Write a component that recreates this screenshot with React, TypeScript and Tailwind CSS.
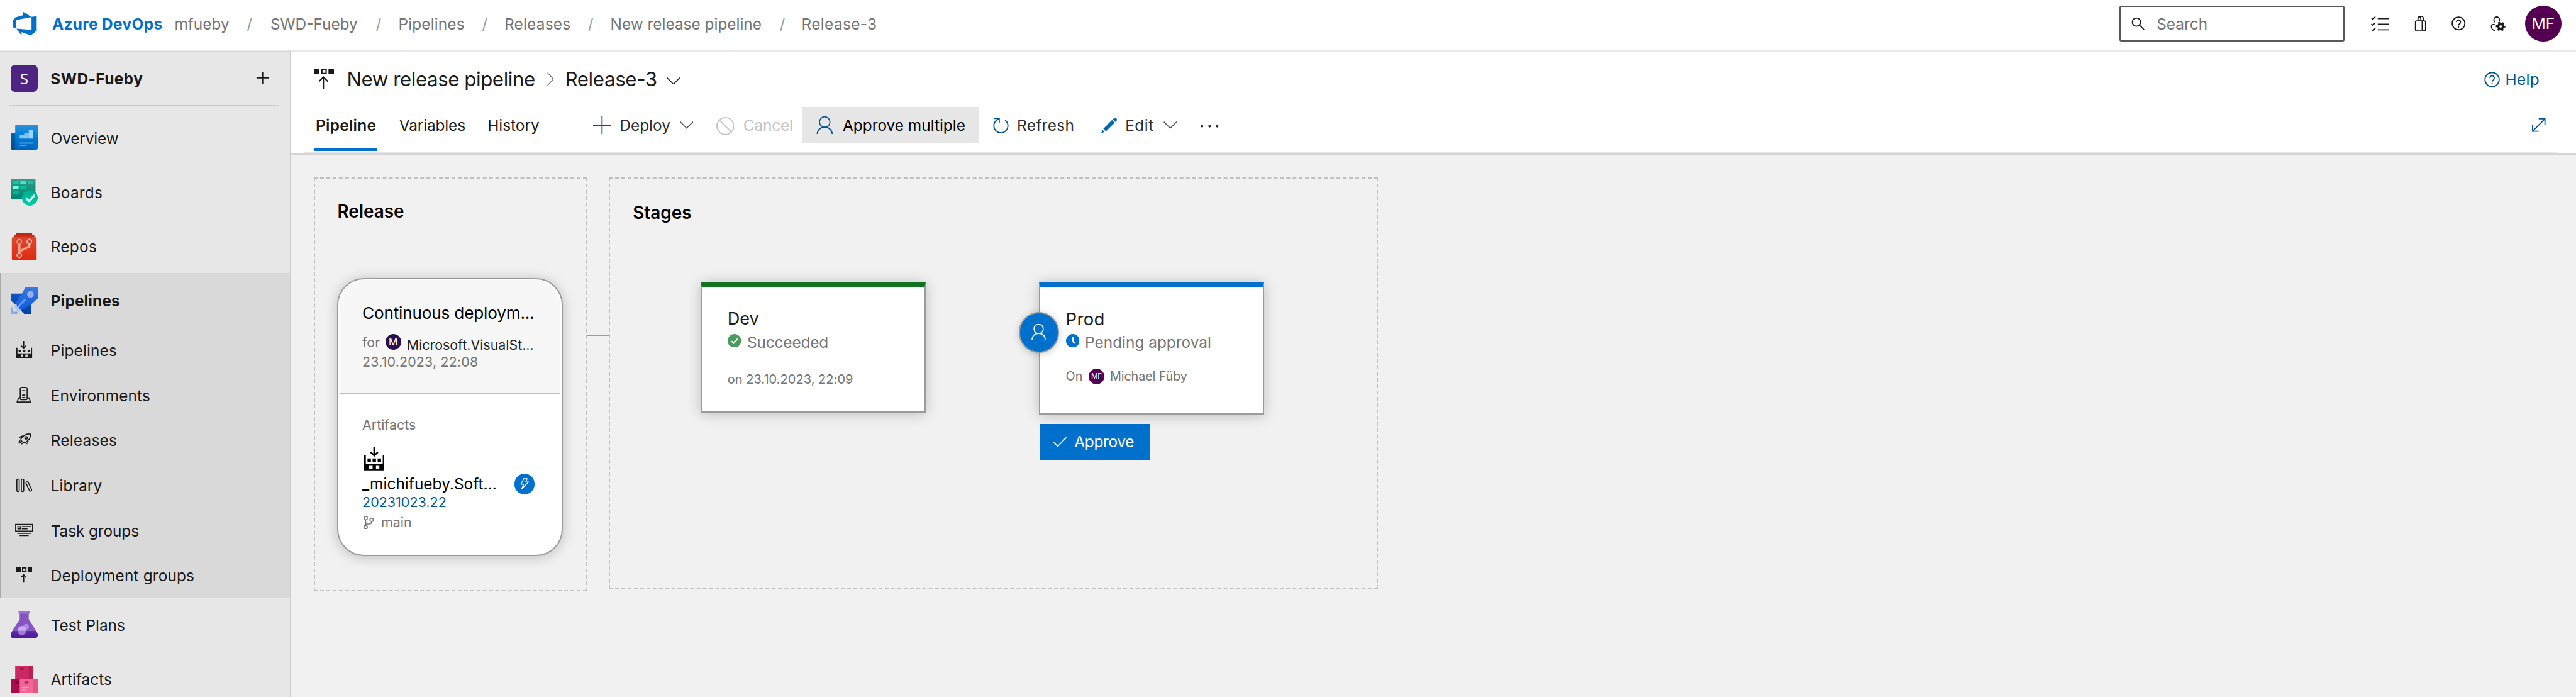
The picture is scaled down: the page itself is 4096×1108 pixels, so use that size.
import React from "react";

/* ---------- navigation icons ---------- */

const LogoIcon = () => (
  <svg viewBox="0 0 16 16" className="ml-20 h-48 w-48 shrink-0" fill="#0070cd">
    <path d="M15 3.622v8.512L11.5 15l-5.425-1.975v1.958L3.004 10.97l8.951.7V4.005L15 3.622zm-2.984.428L6.994 1v2.001L2.382 4.356 1 6.13v4.029l1.978.873V5.869l9.038-1.818z" />
  </svg>
);

const OverviewIcon = () => (
  <svg viewBox="0 0 48 48" className="h-48 w-48">
    <defs>
      <linearGradient id="ov" x1="0" y1="0" x2="0" y2="1">
        <stop offset="0" stopColor="#2b91dc" />
        <stop offset="0.4" stopColor="#0081d6" />
        <stop offset="1" stopColor="#0062ba" />
      </linearGradient>
      <linearGradient id="ovb" x1="0" y1="0" x2="0" y2="1">
        <stop offset="0" stopColor="#0068b0" />
        <stop offset="1" stopColor="#00498c" />
      </linearGradient>
    </defs>
    <path d="M1 16h8v26a4 4 0 0 1-4 4h-1a4 4 0 0 1-4-4V17a1 1 0 0 1 1-1z" fill="url(#ovb)" />
    <path d="M9 2h38a1 1 0 0 1 1 1v39a4 4 0 0 1-4 4H4a4 4 0 0 0 4-4V3a1 1 0 0 1 1-1z" fill="url(#ov)" />
    <path d="M40 28h8v14a4 4 0 0 1-8 0z" fill="#0072d2" opacity="0.7" />
    <path d="M16 20h8v6h-8zM24 16h8v10h-8z" fill="#83c4f8" />
    <path d="M32 10h8v16h-8z" fill="#9dd4ff" />
    <path d="M16 33h24v2H16zM16 37h12v2H16z" fill="#4fa6ec" />
  </svg>
);

const BoardsIcon = () => (
  <svg viewBox="0 0 48 48" className="h-48 w-48">
    <defs>
      <linearGradient id="bo" x1="0" y1="0" x2="0" y2="1">
        <stop offset="0" stopColor="#2f9f8b" />
        <stop offset="1" stopColor="#008570" />
      </linearGradient>
      <linearGradient id="boc" x1="0" y1="0" x2="0" y2="1">
        <stop offset="0" stopColor="#00a98c" />
        <stop offset="1" stopColor="#00cca8" />
      </linearGradient>
    </defs>
    <rect width="44" height="36" rx="1.5" fill="url(#bo)" />
    <path d="M4 4h10v6H4zM30 4h10v6H30z" fill="#22bea2" />
    <path d="M17 4h10v6H17z" fill="#4fe0c8" />
    <path d="M4 13h10v6H4z" fill="#72ffe2" />
    <path d="M17 13h10v6H17z" fill="#10b89c" />
    <path d="M4 22h10v6H4z" fill="#06b598" />
    <circle cx="34" cy="34" r="14" fill="url(#boc)" />
    <path d="M27 34.500l6 5.500 9.500-11" fill="none" stroke="#b4ffee" strokeWidth="4" />
  </svg>
);

const ReposIcon = () => (
  <svg viewBox="0 0 48 48" className="h-48 w-48">
    <defs>
      <linearGradient id="re" x1="0" y1="0" x2="0" y2="1">
        <stop offset="0" stopColor="#d84a34" />
        <stop offset="1" stopColor="#de2c10" />
      </linearGradient>
    </defs>
    <rect x="10" y="0" width="28" height="6" rx="1.5" fill="#b9270f" />
    <rect x="6" y="4" width="36" height="8" rx="1.5" fill="#cf2a12" />
    <rect x="2" y="8" width="44" height="40" rx="1.5" fill="url(#re)" />
    <path d="M15.3 20v16M33 20v4.5L15.3 33" fill="none" stroke="#ff9f88" strokeWidth="4" />
    <g fill="#d9412a" stroke="#ffc3b4" strokeWidth="2">
      <circle cx="15.3" cy="16" r="4" stroke="#ff9f88" />
      <circle cx="33" cy="16" r="4" />
      <circle cx="15.3" cy="40" r="4" />
    </g>
  </svg>
);

const PipelinesIcon = () => (
  <svg viewBox="0 0 48 48" className="h-48 w-48">
    <defs>
      <linearGradient id="pi" x1="0" y1="0" x2="0" y2="1">
        <stop offset="0" stopColor="#3c78e0" />
        <stop offset="1" stopColor="#0c5ad8" />
      </linearGradient>
      <linearGradient id="pib" x1="0" y1="0" x2="0" y2="1">
        <stop offset="0" stopColor="#0f55c4" />
        <stop offset="1" stopColor="#0040a8" />
      </linearGradient>
    </defs>
    <path d="M1 12h19L8 31 0 24V13a1 1 0 0 1 1-1zM36 28v19a1 1 0 0 1-1 1H24l-7-7z" fill="url(#pib)" />
    <path d="M28.5 0H46a2 2 0 0 1 2 2v18.5L35 32 18 42 8 31 26 1.5z" fill="url(#pi)" />
    <circle cx="35" cy="13" r="6" fill="#8fb1f0" />
    <path d="M25 20l3 3-14 15-3-3z" fill="#5c93ee" />
    <path d="M0 36h4v8h8v4H0z" fill="#86aaec" />
    <path d="M8 30l3 2v4l4-1-1 4 4 1v3l-5 1-4-4-2-4z" fill="#a9c3f2" />
  </svg>
);

const TestPlansIcon = () => (
  <svg viewBox="0 0 48 48" className="h-48 w-48">
    <defs>
      <linearGradient id="tp" x1="0" y1="0" x2="0" y2="1">
        <stop offset="0" stopColor="#8254bd" />
        <stop offset="1" stopColor="#8a53c8" />
      </linearGradient>
      <linearGradient id="tpl" x1="0" y1="0" x2="0" y2="1">
        <stop offset="0" stopColor="#5f2ca8" />
        <stop offset="1" stopColor="#4e1796" />
      </linearGradient>
    </defs>
    <path d="M16 2h16v12l13 20H3l13-20z" fill="url(#tp)" />
    <rect x="14" y="0" width="20" height="4" rx="0.5" fill="#9c73cf" />
    <path d="M3.3 34h41.4l2.6 4.5c2 4.5-.3 9.5-5.3 9.5H6c-5 0-7.3-5-5.3-9.5z" fill="url(#tpl)" />
    <circle cx="27.3" cy="27" r="5" fill="#b18be0" />
    <circle cx="20" cy="34" r="8" fill="#b28de6" opacity="0.8" />
    <path d="M12 34a8 8 0 0 1 16 0z" fill="#c9a9ef" />
  </svg>
);

const ArtifactsIcon = () => (
  <svg viewBox="0 0 48 48" className="h-48 w-48">
    <rect x="8" y="0" width="32" height="26" rx="1.5" fill="#cc2864" />
    <path d="M32 0h6.5A1.5 1.5 0 0 1 40 1.5V25h-8z" fill="#bb1e58" />
    <rect x="16" y="4" width="8" height="4" rx="2" fill="#a81a4c" />
    <rect x="0" y="24" width="18" height="24" rx="1.5" fill="#ab0a4b" />
    <rect x="8" y="28" width="8" height="4" rx="2" fill="#7c0030" />
    <rect x="16" y="24" width="32" height="24" rx="1.5" fill="#ef6797" />
    <path d="M40 24h6.5a1.5 1.5 0 0 1 1.5 1.5v21a1.5 1.5 0 0 1-1.5 1.5H40z" fill="#e7568b" />
    <rect x="24" y="28" width="8" height="4" rx="2" fill="#cb2765" />
    <path d="M20 38h12v2H20zM20 42h7v2h-7z" fill="#ff9cbe" />
  </svg>
);

const BuildIcon = () => (
  <svg viewBox="0 1 28 30" className="h-30 w-28 overflow-visible" fill="#1a1a1a">
    <path d="M12 0h2v12h-2zM0 12h2v10h24V12h2v18H0zM8 24v4h4v-4zM16 24v4h4v-4zM4 16h4v4H4zM12 16h4v4h-4zM20 16h4v4h-4z" fillRule="evenodd" />
    <path d="M8.7 8.5l4.3 4 4.3-4" fill="none" stroke="#1a1a1a" strokeWidth="2" />
  </svg>
);

const EnvironmentsIcon = () => (
  <svg viewBox="0 0 28 30" className="h-30 w-28" fill="none" stroke="#1a1a1a" strokeWidth="1.8" strokeLinejoin="round">
    <rect x="6.9" y="1.9" width="12.2" height="22" rx="2.2" />
    <path d="M7 20.5H4.3L1.2 28h24l-3-7.5H19M10.3 8h5.6M10.3 15.8h5.6M10.3 19.8h5.6" />
  </svg>
);

const ReleasesIcon = () => (
  <svg viewBox="0 0 28 30" className="h-30 w-28" fill="none" stroke="#1a1a1a" strokeWidth="1.8" strokeLinejoin="round">
    <path d="M8 13.5C12 6.5 18 3.5 25 4.5c1 7-3 11-9.5 15.5-3 0-7.5-2.500-7.5-6.500z" />
    <circle cx="17.3" cy="11.3" r="2.2" />
    <path d="M12 8.3c-3-.8-4.5 0-6 2.5l3 1M20.5 16.5c.8 3 0 4.3-2.5 5.3l-1.5-2.5M7.5 16l-2 1.5M9.5 18l-5 3.5M11.5 20.5l-2.5 2M5 18l-1.5 1" />
  </svg>
);

const LibraryIcon = () => (
  <svg viewBox="0 0 28 30" className="h-30 w-28" fill="none" stroke="#1a1a1a" strokeWidth="1.8">
    <rect x="0.9" y="3.9" width="4.2" height="22.2" rx="2" />
    <rect x="8.9" y="3.9" width="4.2" height="22.2" rx="2" />
    <rect x="20" y="8" width="4.2" height="18" rx="2" transform="rotate(-25 22.1 17)" />
  </svg>
);

const TaskGroupsIcon = () => (
  <svg viewBox="0 0 32 30" className="-ml-2 h-30 w-32" fill="none" stroke="#1a1a1a" strokeWidth="1.8">
    <rect x="1" y="4" width="30" height="12" />
    <rect x="5" y="8" width="4.5" height="4" />
    <path d="M12 8h16M12 12h10M4 20h24M8 24h16" />
  </svg>
);

const DeploymentGroupsIcon = () => (
  <svg viewBox="0 1 28 30" className="h-30 w-28" fill="#1a1a1a">
    <path d="M0 2h8v8H0zM20 2h8v8h-8z" />
    <path d="M10 2h8v8h-8zM12 4v4h4V4z" fillRule="evenodd" />
    <path d="M13 28V15.5M8.7 19.5l4.3-4.3 4.3 4.3" fill="none" stroke="#1a1a1a" strokeWidth="2" />
  </svg>
);

/* ---------- shared glyphs ---------- */

const PersonGlyph = ({ className, stroke, width }: { className: string; stroke: string; width: number }) => (
  <svg viewBox="0 0 32 32" className={className} fill="none" stroke={stroke} strokeWidth={width}>
    <circle cx="16" cy="10" r="9.3" />
    <path d="M2.7 32C2.7 24 8.5 19.2 16 19.2S29.3 24 29.3 32" />
  </svg>
);

const ChevronDown = ({ className, stroke }: { className: string; stroke: string }) => (
  <svg viewBox="0 0 24 13" className={className} fill="none" stroke={stroke} strokeWidth="1.6">
    <path d="M.7.7L12 12 23.3.7" />
  </svg>
);

const HelpGlyph = ({ className, stroke, width }: { className: string; stroke: string; width: number }) => (
  <svg viewBox="0 0 28 28" className={className} fill="none" stroke={stroke} strokeWidth={width}>
    <circle cx="14" cy="14" r="12.6" />
    <path d="M10 11.2a4 4 0 1 1 6.3 3.3c-1.5 1.1-2.3 1.8-2.3 3.7" />
    <path d="M14 20v2.3" />
  </svg>
);

/* ---------- header ---------- */

const Slash = ({ className }: { className: string }) => (
  <span className={`shrink-0 text-[25px] text-[#a0a0a0] ${className}`}>/</span>
);

function Header() {
  return (
    <header className="flex h-92 shrink-0 items-start border-b-2 border-[#eaeaea] bg-white">
      <div className="flex h-84 w-full items-center whitespace-nowrap text-[24.4px] text-[#757575]">
        <LogoIcon />
        <div className="flex items-center pt-[2px]">
          <span className="ml-24.5 w-217 font-bold tracking-[0.015em] text-[#0070cd]">Azure DevOps</span>
          <span className="w-128">mfueby</span>
          <Slash className="w-42" />
          <span className="w-187">SWD-Fueby</span>
          <Slash className="w-40" />
          <span className="w-148 tracking-[0.006em]">Pipelines</span>
          <Slash className="w-40" />
          <span className="w-148 tracking-[0.009em]">Releases</span>
          <Slash className="w-40" />
          <span className="w-300">New release pipeline</span>
          <Slash className="w-39" />
          <span className="tracking-[0.015em]">Release-3</span>
        </div>
        <div className="ml-auto flex h-64 w-400 items-center rounded-[3px] border-2 border-[#595959]">
          <svg viewBox="0 0 24 24" className="ml-19 h-24 w-24" fill="none" stroke="#1a1a1a" strokeWidth="2">
            <circle cx="9" cy="9" r="7.3" />
            <path d="M14 14l8.5 8.5" />
          </svg>
          <span className="ml-21 pt-[2px]">Search</span>
        </div>
        <svg viewBox="0 0 32 28" className="ml-46 h-28 w-32" fill="none" stroke="#1a1a1a" strokeWidth="2">
          <path d="M12 5h20M12 15h20M12 25h20M.7 3.8l2.6 2.6L7.8 1.5M.7 14.3l2.6 2.6L7.8 12M.7 24.3l2.6 2.6L7.8 22" />
        </svg>
        <svg viewBox="0 0 24 28" className="ml-44 h-28 w-24" fill="none" stroke="#1a1a1a" strokeWidth="2">
          <rect x="3" y="9" width="18" height="18" rx="2.5" />
          <path d="M15 9v15.5l2 2.5M7.5 9V5.5c0-5 5-5 5 0V9M10.5 1.5c4-1.5 6.5 0 6.5 4V9" />
        </svg>
        <HelpGlyph className="ml-43.5 h-25 w-25" stroke="#1a1a1a" width={2.3} />
        <svg viewBox="0 0 28 28" className="ml-43.5 h-28 w-28" fill="none" stroke="#1a1a1a" strokeWidth="2">
          <path d="M8.2 11.3a5 5 0 1 1 6.6-.8M7.5 15.5H5c-2.5 0-3.5 1-3.3 4C2 23.5 4.5 26 8.5 26.5" />
          <circle cx="18" cy="19" r="4.3" strokeWidth="4.2" />
          <circle cx="18" cy="19" r="7.2" strokeWidth="2.6" strokeDasharray="3.77 3.77" strokeDashoffset="1.9" />
        </svg>
        <span className="mr-26 ml-34 flex h-64 w-64 items-center justify-center rounded-full bg-[#52004f] text-white">MF</span>
      </div>
    </header>
  );
}

/* ---------- sidebar ---------- */

function NavItem({ icon, label, className = "" }: { icon: React.ReactNode; label: string; className?: string }) {
  return (
    <a className="flex h-96 shrink-0 items-center">
      <span className="ml-19 w-48">{icon}</span>
      <span className={`ml-23 pt-[2px] ${className}`}>{label}</span>
    </a>
  );
}

function SubItem({ icon, label, className = "" }: { icon: React.ReactNode; label: string; className?: string }) {
  return (
    <a className="flex h-80 shrink-0 items-center">
      <span className="ml-29 w-38">{icon}</span>
      <span className={`ml-23 pt-[2px] ${className}`}>{label}</span>
    </a>
  );
}

function Sidebar() {
  return (
    <nav className="-mt-2 flex w-516 shrink-0 flex-col overflow-hidden border-t-2 border-r-2 border-t-[#d3d3d3] border-r-[#cdcdcd] bg-[#e7e7e7] whitespace-nowrap text-[24.4px] text-[#1a1a1a]">
      <div className="flex h-94 shrink-0 items-center">
        <span className="ml-19 flex h-48 w-48 items-center justify-center rounded-[7px] bg-[#4f2383] font-['Noto_Sans'] text-[24.4px] text-white">S</span>
        <span className="ml-22.5 pt-[1px] font-bold tracking-[0.018em]">SWD-Fueby</span>
        <svg viewBox="0 0 24 24" className="mr-35.5 mb-3 ml-auto h-24 w-24" stroke="#1a1a1a" strokeWidth="2">
          <path d="M12 1v22M1 12h22" />
        </svg>
      </div>
      <div className="mr-20 mb-8 ml-16 h-2 shrink-0 bg-[#cacaca]" />
      <NavItem icon={<OverviewIcon />} label="Overview" className="tracking-[-0.006em]" />
      <NavItem icon={<BoardsIcon />} label="Boards" className="tracking-[0.009em]" />
      <NavItem icon={<ReposIcon />} label="Repos" className="tracking-[0.013em]" />
      <div className="flex shrink-0 flex-col bg-[#d9d9d9] shadow-[inset_2px_0_0_#a9a9a9]">
        <NavItem icon={<PipelinesIcon />} label="Pipelines" className="font-bold tracking-[0.006em]" />
        <SubItem icon={<BuildIcon />} label="Pipelines" className="tracking-[0.006em]" />
        <SubItem icon={<EnvironmentsIcon />} label="Environments" className="tracking-[0.005em]" />
        <SubItem icon={<ReleasesIcon />} label="Releases" className="tracking-[0.009em]" />
        <SubItem icon={<LibraryIcon />} label="Library" className="tracking-[0.005em]" />
        <SubItem icon={<TaskGroupsIcon />} label="Task groups" className="tracking-[-0.004em]" />
        <SubItem icon={<DeploymentGroupsIcon />} label="Deployment groups" className="tracking-[0.006em]" />
      </div>
      <NavItem icon={<TestPlansIcon />} label="Test Plans" />
      <NavItem icon={<ArtifactsIcon />} label="Artifacts" />
    </nav>
  );
}

/* ---------- page header and toolbar ---------- */

function PageHeader() {
  return (
    <div className="shrink-0 border-b-2 border-[#d5d5d5] bg-white whitespace-nowrap text-[24.4px]">
      <div className="flex h-96 items-center pl-40 text-[31.3px] text-[#1a1a1a]">
        <svg viewBox="0 0 36 36" className="h-36 w-36" fill="#1a1a1a">
          <path d="M0 0h10v10H0zM26 0h10v10H26z" />
          <path d="M13 0h10v10H13zM15.5 2.5v5h5v-5z" fillRule="evenodd" />
          <path d="M17 36V15.5M9 23l8-8 8 8" fill="none" stroke="#1a1a1a" strokeWidth="2.4" />
        </svg>
        <span className="ml-23 w-355 pt-[1px] tracking-[-0.0147em]">New release pipeline</span>
        <svg viewBox="0 0 12 24" className="h-24 w-12" fill="none" stroke="#757575" strokeWidth="1.6">
          <path d="M.7.7L11 12 .7 23.3" />
        </svg>
        <span className="ml-20 w-180 pt-[1px] tracking-[-0.0119em]">Release-3</span>
        <ChevronDown className="mt-7 h-13 w-24" stroke="#1a1a1a" />
        <HelpGlyph className="mt-3 ml-auto h-28 w-28" stroke="#005494" width={2} />
        <span className="mr-62 ml-9.5 w-63.5 pt-[1px] text-[24.4px] tracking-[0.015em] text-[#005494]">Help</span>
      </div>
      <div className="flex h-82 items-start text-[#1a1a1a]">
        <div className="ml-42 flex h-80 w-111 shrink-0 justify-center border-b-4 border-[#0070cd]">
          <span className="leading-68 font-semibold tracking-[0.0126em]">Pipeline</span>
        </div>
        <div className="flex h-68 w-full items-center">
          <span className="ml-39 w-156.5 tracking-[-0.006em]">Variables</span>
          <span className="w-145.5">History</span>
          <span className="h-48 w-2 bg-[#bdbdbd]" />
          <svg viewBox="0 0 32 32" className="ml-40 h-32 w-32" stroke="#005494" strokeWidth="2">
            <path d="M16 0v32M0 16h32" />
          </svg>
          <span className="ml-15 w-107 text-[#2e2e2e]">Deploy</span>
          <ChevronDown className="h-13 w-24" stroke="#4a4a4a" />
          <svg viewBox="0 0 32 32" className="mt-4 ml-40 h-32 w-32" fill="none" stroke="#c3c3c3" strokeWidth="2">
            <circle cx="16" cy="16" r="15" />
            <path d="M5.4 5.4l21.2 21.2" />
          </svg>
          <span className="ml-16 w-105 tracking-[-0.006em] text-[#c3c3c3]">Cancel</span>
          <div className="flex h-64 w-314 shrink-0 items-center bg-[#e6e6e6] text-black">
            <PersonGlyph className="ml-23.5 h-32 w-32" stroke="#005494" width={2} />
            <span className="ml-16">Approve multiple</span>
          </div>
          <svg viewBox="0 0 28 28" className="ml-24 h-28 w-28" fill="none" stroke="#005494" strokeWidth="2">
            <path d="M21.5 4.5A12.5 12.5 0 1 1 6 4.8L10 2M1 1.5h10v8.5" />
          </svg>
          <span className="ml-14.5 w-149.5 tracking-[0.0134em] text-[#2e2e2e]">Refresh</span>
          <svg viewBox="0 0 28 28" className="h-28 w-28" fill="#0067b5">
            <path d="M0 27.5l2.2-6 3.9 4zM3.7 19.7L19.2 4.2l4.6 4.6L8.3 24.3zM20.5 3l1.7-1.7a3.2 3.2 0 0 1 4.6 4.5L25 7.5z" />
          </svg>
          <span className="ml-14.5 w-67.5 tracking-[0.021em] text-[#2e2e2e]">Edit</span>
          <ChevronDown className="h-13 w-24" stroke="#4a4a4a" />
          <svg viewBox="0 0 32 8" className="mt-3 ml-42 h-8 w-32" fill="#2e2e2e">
            <circle cx="2.5" cy="4" r="2.3" />
            <circle cx="16" cy="4" r="2.3" />
            <circle cx="29.5" cy="4" r="2.3" />
          </svg>
          <svg viewBox="0 0 24 24" className="mr-54 ml-auto h-24 w-24" fill="none" stroke="#005494" strokeWidth="2">
            <path d="M1.5 22.5l21-21M12 1h11v11M1 12v11h11" />
          </svg>
        </div>
      </div>
      <div className="mr-34 ml-24 h-2 bg-[#e8e8e8]" />
    </div>
  );
}

/* ---------- release canvas ---------- */

function ReleaseCard() {
  return (
    <div className="flex h-494 w-400 flex-col rounded-[43px] border-2 border-[#9b9b9b] bg-white p-2 shadow-[0_2px_20px_rgba(0,0,0,0.22)]">
      <div className="flex h-202 shrink-0 flex-col rounded-t-[39px] border-b-2 border-[#bfbfbf] bg-[#f7f7f7] pt-43.5 pl-40 text-[21.4px]">
        <span className="h-32 text-[26.2px] leading-32 tracking-[-0.0078em] text-black">Continuous deploym...</span>
        <div className="mt-18 flex h-32 items-center text-[#757575]">
          <span className="w-41 pt-[1px]">for</span>
          <span className="flex h-28 w-28 items-center justify-center rounded-full bg-[#2a1050] text-[16px] text-white">M</span>
          <span className="ml-10 pt-10 tracking-[-0.0005em] text-[#1f1f1f]">Microsoft.VisualSt...</span>
        </div>
        <span className="mt-3.5 h-32 leading-32 tracking-[0.008em] text-[#757575]">23.10.2023, 22:08</span>
      </div>
      <div className="flex flex-col pt-38.5 pl-40 text-[21.4px] text-[#757575]">
        <span className="h-32 leading-32">Artifacts</span>
        <svg viewBox="0 0 12 14" className="mt-23 ml-3 h-42 w-36" fill="#000">
          <path d="M5.45 0h1.1v5h-1.1zM0 5h1v5h10V5h1v9H0zM3 11v2h2v-2zM7 11v2h2v-2zM2 7h2v2H2zM5 7h2v2H5zM8 7h2v2H8z" fillRule="evenodd" />
          <path d="M3.9 3.3L6 5.3l2.1-2" fill="none" stroke="#000" strokeWidth="1" />
        </svg>
        <div className="mt-6 flex h-36 w-306 items-center justify-between">
          <span className="text-[24.4px] tracking-[0.002em] text-black">_michifueby.Soft...</span>
          <span className="flex h-36 w-36 items-center justify-center rounded-full bg-[#0070cd]">
            <svg viewBox="0 0 16 20" className="h-20 w-16" fill="none" stroke="#fff" strokeWidth="1.6" strokeLinejoin="round">
              <path d="M6.5 1h6L9.5 7H15L3 19l3.2-8H1.5z" />
            </svg>
          </span>
        </div>
        <a className="mt-1 h-28 leading-28 tracking-[0.003em] text-[#005494]">20231023.22</a>
        <div className="mt-7 flex h-28 items-center">
          <svg viewBox="0 0 20 24" className="ml-1.5 h-24 w-20" fill="none" stroke="#757575" strokeWidth="1.8">
            <circle cx="5" cy="4" r="3" />
            <circle cx="5" cy="20" r="3" />
            <circle cx="15.5" cy="7" r="3" />
            <path d="M5 7v10M15.5 10c0 3-2 4.5-5 4.5H5" />
          </svg>
          <span className="ml-12">main</span>
        </div>
      </div>
    </div>
  );
}

function Canvas() {
  return (
    <div className="flex grow items-start bg-[#f1f1f1] pt-40 pl-40 whitespace-nowrap">
      <section className="h-734 w-484 shrink-0 border-2 border-dashed border-[#c0c0c0] pl-40">
        <h2 className="mt-39 h-40 text-[27.9px] leading-40 font-semibold text-black">Release</h2>
        <div className="mt-97">
          <ReleaseCard />
        </div>
      </section>
      <div className="mt-279 h-2 w-40 shrink-0 bg-[#9b9b9b]" />
      <section className="h-730 w-1364 shrink-0 border-2 border-dashed border-[#c0c0c0]">
        <h2 className="mt-42 ml-40 h-40 text-[27.9px] leading-40 font-semibold text-black">Stages</h2>
        <div className="mt-101 flex items-start">
          <div className="mt-88 h-2 w-160 bg-[#9b9b9b]" />
          <article className="flex h-232 w-400 flex-col border-2 border-t-[9px] border-[#9b9b9b] border-t-[#0f731f] bg-white pl-45.5 shadow-[0_2px_20px_rgba(0,0,0,0.22)]">
            <span className="mt-40.5 h-32 text-[27.2px] leading-32 text-[#1a1a1a]">Dev</span>
            <div className="mt-6 flex h-32 items-center text-[24.4px] text-[#757575]">
              <svg viewBox="0 0 24 24" className="h-24 w-24">
                <circle cx="12" cy="12" r="12" fill="#4a9c5d" />
                <path d="M7 12.5l3.5 3.5L17.5 8.5" fill="none" stroke="#fff" strokeWidth="2.6" />
              </svg>
              <span className="ml-11 pt-[5px] tracking-[-0.006em]">Succeeded</span>
            </div>
            <span className="mt-39.5 h-28 text-[20px] leading-28 tracking-[0.002em] text-[#757575]">on 23.10.2023, 22:09</span>
          </article>
          <div className="mt-88 h-2 w-200 bg-[#9b9b9b]" />
          <div className="w-400">
            <article className="relative flex h-236 flex-col border-2 border-t-[9px] border-[#9b9b9b] border-t-[#0070cd] bg-white pl-45.5 shadow-[0_2px_20px_rgba(0,0,0,0.22)]">
              <span className="absolute top-44 -left-38 flex h-72 w-72 items-center justify-center rounded-full border-2 border-[#9b9b9b] bg-[#0070cd] shadow-[0_2px_12px_rgba(0,0,0,0.2)]">
                <PersonGlyph className="mb-2 h-28 w-28" stroke="#fff" width={2.1} />
              </span>
              <span className="mt-40.5 h-32 text-[27.6px] leading-32 tracking-[0.01em] text-[#1a1a1a]">Prod</span>
              <div className="mt-6 flex h-32 items-center text-[24.4px] text-[#757575]">
                <svg viewBox="0 0 24 24" className="h-24 w-24">
                  <circle cx="12" cy="12" r="12" fill="#0070cd" />
                  <path d="M12 5v8l4.5 3.5" fill="none" stroke="#fff" strokeWidth="2.6" />
                </svg>
                <span className="ml-10 pt-[5px]">Pending approval</span>
              </div>
              <div className="mt-34 flex h-28 items-center text-[19.8px] text-[#757575]">
                <span className="w-40.5">On</span>
                <span className="flex h-28 w-28 items-center justify-center rounded-full bg-[#52004f] text-[11.5px] text-white">MF</span>
                <span className="ml-10 tracking-[-0.006em]">Michael Füby</span>
              </div>
            </article>
            <button className="mt-16 ml-2 flex h-64 w-196 items-center bg-[#0070cd] text-[24.4px] text-white">
              <svg viewBox="0 0 26 20" className="ml-23 h-20 w-26" fill="none" stroke="#fff" strokeWidth="1.9">
                <path d="M.7 10.5l8 8L25.3 1.5" />
              </svg>
              <span className="ml-12 tracking-[-0.012em]">Approve</span>
            </button>
          </div>
        </div>
      </section>
    </div>
  );
}

export default function App() {
  return (
    <div className="flex h-[1108px] w-[4096px] flex-col overflow-hidden bg-[#f1f1f1] font-[Inter,sans-serif] antialiased [--spacing:0.89667px]">
      <Header />
      <div className="flex min-h-0 grow">
        <Sidebar />
        <main className="flex min-w-0 grow flex-col">
          <PageHeader />
          <Canvas />
        </main>
      </div>
    </div>
  );
}
